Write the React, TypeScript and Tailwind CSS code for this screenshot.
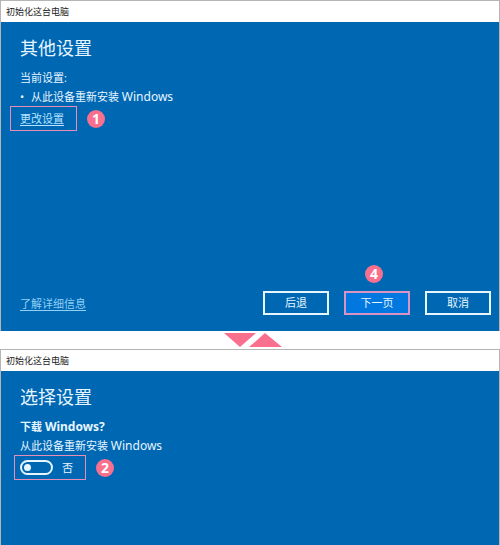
import React, { useState } from 'react';
import clsx from 'clsx';

interface StepBadgeProps {
  step: number;
}

const StepBadge = ({ step }: StepBadgeProps) => (
  <span className="flex size-[18px] shrink-0 items-center justify-center rounded-full bg-[#f9708f] font-['Noto_Sans',sans-serif] text-[14px] leading-[18px] font-bold text-white">
    {step}
  </span>
);

interface ResetWindowProps {
  heading: string;
  className?: string;
  children: React.ReactNode;
}

const ResetWindow = ({ heading, className, children }: ResetWindowProps) => (
  <section className={clsx('flex flex-col border border-b-0 border-[#b5b5b5]', className)}>
    <header className="bg-white px-[5px] text-[9px] leading-[21px] text-[#222]">初始化这台电脑</header>
    <div className="flex grow flex-col bg-[#0067b3] pt-[14px] text-[#e6f6ff]">
      <h2 className="px-[19px] text-[18px] leading-6">{heading}</h2>
      {children}
    </div>
  </section>
);

interface WizardButtonProps {
  label: string;
  primary?: boolean;
}

const WizardButton = ({ label, primary = false }: WizardButtonProps) => (
  <button
    type="button"
    className={clsx(
      'h-6 w-[66px] border-2 text-[11px] leading-5',
      primary ? 'border-[#d993c4] bg-[#0078e0]' : 'border-[#e6f6ff] bg-transparent'
    )}
  >
    {label}
  </button>
);

const Divider = () => (
  <svg viewBox="0 0 58 14" className="mt-[2px] mb-[2px] ml-[224px] h-[14px] w-[58px]" fill="#f9708f" aria-hidden="true">
    <path d="M0 0H32L16 14Z" />
    <path d="M25 14H58L41 0Z" />
  </svg>
);

const App = () => {
  const [download, setDownload] = useState(false);

  return (
    <main className="flex min-h-screen flex-col bg-white font-['Noto_Sans','Noto_Sans_CJK_SC',sans-serif] text-[11px] leading-[19px]">
      <ResetWindow heading="其他设置">
        <p className="mt-2 px-[19px]">当前设置:</p>
        <ul className="px-[19px]">
          <li className="flex">
            <span className="w-[11px]">•</span>
            <p>从此设备重新安装 <span className="text-[12px] leading-none">Windows</span></p>
          </li>
        </ul>
        <div className="flex items-center gap-[10px] pl-[9px]">
          <div className="border border-[#e58fb8] py-[2px] pr-3 pl-[9px]">
            <a href="#settings" className="text-[#b5e4ff] underline underline-offset-2">更改设置</a>
          </div>
          <StepBadge step={1} />
        </div>

        {/* Footer with the wizard's navigation */}
        <footer className="mt-[134px] flex items-end justify-between pr-2 pb-4 pl-[19px]">
          <a href="#details" className="mb-[2px] text-[#8fd0f7] underline underline-offset-2">了解详细信息</a>
          <div className="flex items-end gap-[15px]">
            <WizardButton label="后退" />
            <div className="flex flex-col gap-2">
              <div className="pl-[21px]">
                <StepBadge step={4} />
              </div>
              <WizardButton label="下一页" primary />
            </div>
            <WizardButton label="取消" />
          </div>
        </footer>
      </ResetWindow>

      <Divider />

      <ResetWindow heading="选择设置" className="grow">
        <p className="mt-2 px-[19px] font-bold">下载 <span className="text-[12px] leading-none">Windows?</span></p>
        <p className="px-[19px]">从此设备重新安装 <span className="text-[12px] leading-none">Windows</span></p>
        <div className="flex items-center gap-[10px] pl-[13px]">
          <label className="flex items-center gap-[9px] border border-[#e58fb8] py-[2px] pr-3 pl-[5px]">
            <input
              type="checkbox"
              role="switch"
              checked={download}
              onChange={(e) => setDownload(e.target.checked)}
              className="flex h-[15px] w-[33px] appearance-none items-center rounded-full border-2 border-[#e6f6ff] px-[2px] before:size-[7px] before:rounded-full before:bg-[#e6f6ff] checked:justify-end"
            />
            {download ? '是' : '否'}
          </label>
          <StepBadge step={2} />
        </div>
      </ResetWindow>
    </main>
  );
};

export default App;
